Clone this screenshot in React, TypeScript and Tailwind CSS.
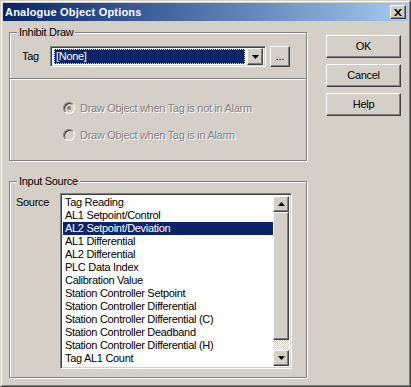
import React from 'react';

const items = [
    'Tag Reading',
    'AL1 Setpoint/Control',
    'AL2 Setpoint/Deviation',
    'AL1 Differential',
    'AL2 Differential',
    'PLC Data Index',
    'Calibration Value',
    'Station Controller Setpoint',
    'Station Controller Differential',
    'Station Controller Differential (C)',
    'Station Controller Deadband',
    'Station Controller Differential (H)',
    'Tag AL1 Count',
    'Tag AL2 Count',
];

const raised =
    'border border-t-white border-l-white border-r-[#404040] border-b-[#404040] shadow-[inset_-1px_-1px_0_#808080]';
const sunken =
    'border border-t-[#808080] border-l-[#808080] border-r-white border-b-white shadow-[inset_1px_1px_0_#404040,inset_-1px_-1px_0_#d4d0c8]';

function Arrow({ down }: { down?: boolean }) {
    return (
        <svg width="7" height="4" viewBox="0 0 7 4">
            <path d={down ? 'M0 0h7L3.5 4z' : 'M0 4h7L3.5 0z'} fill="#000" />
        </svg>
    );
}

function Button({ label }: { label: string }) {
    return (
        <button className={`flex h-[23px] w-[75px] items-center justify-center bg-[#d4d0c8] text-[11px] text-black ${raised}`}>
            {label}
        </button>
    );
}

function Radio({ checked, label }: { checked?: boolean; label: string }) {
    return (
        <div className="flex items-center">
            <span className="flex h-[12px] w-[12px] items-center justify-center rounded-full border border-t-[#808080] border-l-[#808080] border-r-white border-b-white bg-[#d4d0c8] shadow-[inset_1px_1px_0_#404040]">
                {checked ? <span className="h-[4px] w-[4px] rounded-full bg-[#808080]" /> : null}
            </span>
            <span className="ml-[5px] text-[11px] text-[#808080] [text-shadow:1px_1px_0_#fff]">{label}</span>
        </div>
    );
}

function GroupBox({ title, className, children }: { title: string; className: string; children: React.ReactNode }) {
    return (
        <div className={`relative border border-[#808080] shadow-[1px_1px_0_#fff,inset_1px_1px_0_#fff] ${className}`}>
            <span className="absolute -top-[7px] left-[7px] bg-[#d4d0c8] px-[2px] text-[11px] leading-[13px] text-black">
                {title}
            </span>
            {children}
        </div>
    );
}

export default function App() {
    return (
        <div className="h-[387px] w-[411px] overflow-hidden border border-t-[#d4d0c8] border-l-[#d4d0c8] border-r-[#404040] border-b-[#404040] bg-[#d4d0c8] font-['Liberation_Sans',Arial,sans-serif] tracking-[-0.3px]">
            <div className="h-full border border-t-white border-l-white border-r-[#808080] border-b-[#808080] p-px">
                <div className="flex h-[18px] items-center justify-between bg-gradient-to-r from-[#0a246a] to-[#a6caf0] pl-[2px] pr-[2px]">
                    <span className="text-[11px] font-bold tracking-[0.2px] text-white">Analogue Object Options</span>
                    <span className={`flex h-[14px] w-[16px] items-center justify-center bg-[#d4d0c8] ${raised}`}>
                        <svg width="8" height="7" viewBox="0 0 8 7">
                            <path d="M0 0h2l2 2.2L6 0h2L5 3.5 8 7H6L4 4.8 2 7H0l3-3.5z" fill="#000" />
                        </svg>
                    </span>
                </div>

                <div className="flex pl-[6px]">
                    <div className="flex w-[299px] flex-col">
                        <GroupBox title="Inhibit Draw" className="mt-[11px] h-[129px] w-[298px]">
                            <div className="mt-[13px] flex items-center">
                                <span className="w-[40px] pl-[12px] text-[11px]">Tag</span>
                                <div className={`flex h-[21px] w-[216px] items-center bg-white p-[2px] ${sunken}`}>
                                    <div className="ml-px flex h-[15px] flex-1 items-center bg-[#0a246a] outline-1 outline-dotted outline-[#f5db95] -outline-offset-1">
                                        <span className="pl-[2px] text-[11px] text-white">[None]</span>
                                    </div>
                                    <div className={`ml-[2px] flex h-[17px] w-[16px] items-center justify-center bg-[#d4d0c8] ${raised}`}>
                                        <Arrow down />
                                    </div>
                                </div>
                                <button className={`ml-[4px] flex h-[21px] w-[20px] items-end justify-center bg-[#d4d0c8] pb-[4px] text-[11px] leading-none ${raised}`}>
                                    ...
                                </button>
                            </div>
                            <div className="mt-[11px] border-t border-b border-t-[#808080] border-b-white" />
                            <div className="mt-[20px] flex flex-col gap-[10px] pl-[53px]">
                                <Radio checked label="Draw Object when Tag is not in Alarm" />
                                <Radio label="Draw Object when Tag is in Alarm" />
                            </div>
                        </GroupBox>

                        <GroupBox title="Input Source" className="mt-[20px] h-[197px] w-[298px]">
                            <div className="mt-[11px] flex">
                                <span className="w-[50px] pl-[6px] pt-[1px] text-[11px]">Source</span>
                                <div className={`flex h-[176px] w-[232px] bg-white p-[2px] ${sunken}`}>
                                    <div className="flex-1 overflow-hidden">
                                        {items.map((item, i) => (
                                            <div
                                                key={item}
                                                className={`h-[13px] pl-[2px] text-[11px] leading-[13px] whitespace-nowrap ${i === 2 ? 'bg-[#0a246a] text-white' : 'text-black'}`}
                                            >
                                                {item}
                                            </div>
                                        ))}
                                    </div>
                                    <div className="flex w-[16px] flex-col">
                                        <div className={`flex h-[16px] items-center justify-center bg-[#d4d0c8] ${raised}`}>
                                            <Arrow />
                                        </div>
                                        <div className={`h-[130px] bg-[#d4d0c8] ${raised}`} />
                                        <div className="h-[10px] bg-[image:repeating-conic-gradient(#d4d0c8_0%_25%,#fff_0%_50%)] bg-size-[2px_2px]" />
                                        <div className={`flex h-[16px] items-center justify-center bg-[#d4d0c8] ${raised}`}>
                                            <Arrow down />
                                        </div>
                                    </div>
                                </div>
                            </div>
                        </GroupBox>
                    </div>

                    <div className="ml-[18px] mt-[14px] flex flex-col gap-[6px]">
                        <Button label="OK" />
                        <Button label="Cancel" />
                        <Button label="Help" />
                    </div>
                </div>
            </div>
        </div>
    );
}
